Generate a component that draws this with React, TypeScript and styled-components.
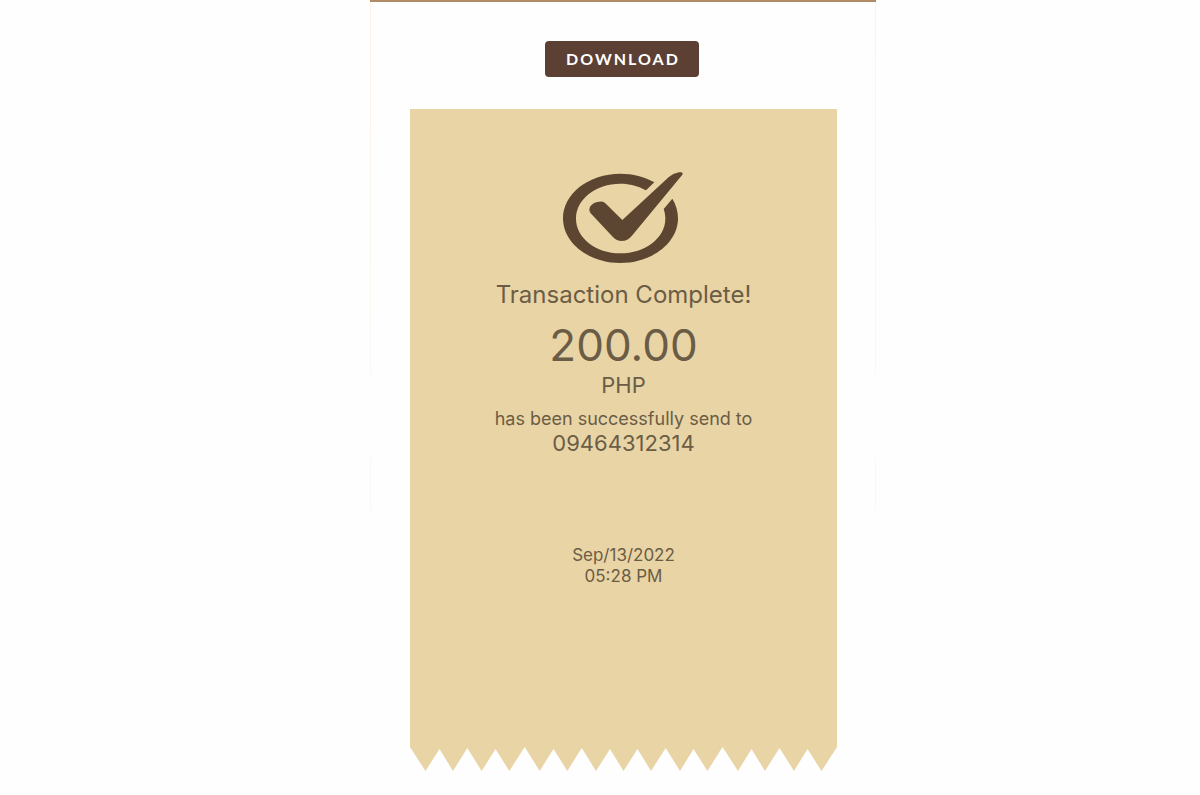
import React from "react";
import styled, { createGlobalStyle } from "styled-components";

const GlobalStyle = createGlobalStyle`
  *, *::before, *::after { box-sizing: border-box; }
  body { margin: 0; background: #fefefe; }
`;

const Page = styled.div`
  display: grid;
  grid-template-columns: 370fr 506fr 324fr;
  min-height: 100vh;
  font-family: Inter, Roboto, sans-serif;
`;

const Panel = styled.main`
  grid-column: 2;
  display: flex;
  flex-direction: column;
  align-items: center;
  padding: 39px 39px 24px 40px;
  border-top: 2px solid #b08c66;
  background:
    linear-gradient(#fbf3e4, #faf8f4) left 0 top 0 / 1px 373px no-repeat,
    linear-gradient(#f8f8f8, #f8f8f8) left 0 top 456px / 1px 53px no-repeat,
    linear-gradient(#fbf3e4, #faf8f4) right 0 top 0 / 1px 373px no-repeat,
    linear-gradient(#f8f8f8, #f8f8f8) right 0 top 456px / 1px 53px no-repeat,
    #fefefe;
`;

const DownloadButton = styled.button`
  width: 154px;
  height: 36px;
  margin: 0 3px 32px 0;
  padding: 0 0 2px 2px;
  border: 0;
  border-radius: 4px;
  background: #5c4033;
  color: #fff;
  font-family: Lato, sans-serif;
  font-size: 16px;
  font-weight: 700;
  letter-spacing: 2px;
  cursor: pointer;
`;

const Receipt = styled.section`
  align-self: stretch;
  display: flex;
  flex-direction: column;
`;

const ReceiptBody = styled.div`
  display: flex;
  flex-direction: column;
  align-items: center;
  min-height: 636px;
  padding-top: 63px;
  background: #e9d4a5;
  color: #6b5d45;
  text-align: center;
`;

const CheckIcon = styled.svg`
  display: block;
  width: 120px;
  height: 91px;
  margin-right: 2px;
  fill: #5d4631;
`;

const Title = styled.h1`
  margin: 16px 0 8px;
  font-size: 24px;
  font-weight: 400;
  line-height: 32px;
`;

const Amount = styled.p`
  margin: 0;
  font-size: 44px;
  line-height: 52px;
`;

const Currency = styled.p`
  margin: 0 0 8px;
  font-size: 22px;
  line-height: 28px;
`;

const Message = styled.p`
  margin: 0;
  font-size: 18px;
  line-height: 24px;
`;

const Recipient = styled.p`
  margin: 0;
  font-size: 22px;
  line-height: 24px;
`;

const Timestamp = styled.time`
  display: flex;
  flex-direction: column;
  margin-top: 90px;
  font-size: 17px;
  line-height: 21px;
`;

const TornEdge = styled.svg`
  display: block;
  width: 100%;
  height: 26px;
  fill: #e9d4a5;
`;

export default function App() {
  return (
    <>
      <GlobalStyle />
      <Page>
        <Panel>
          <DownloadButton type="button">DOWNLOAD</DownloadButton>
          <Receipt>
            <ReceiptBody>
              <CheckIcon viewBox="39 36 360 273" preserveAspectRatio="none" aria-hidden="true">
                <path d="M313 67 C285 50 248 41 211 41 C116 41 39 101 39 175 C39 249 116 309 211 309 C306 309 384 249 384 175 C384 154 378 134 367 116 L341 147 C344 156 346 166 346 176 C346 233 286 280 211 280 C137 280 78 233 78 176 C78 118 137 71 211 71 C239 71 266 78 288 91 Z" />
                <path d="M119 144 C122 132 142 123 158 125 Q162 126 166 130 L217 180 L350 57 C366 42 382 36 394 37 Q400 38 397 44 L247 226 C236 239 227 243 216 243 C204 243 197 239 188 230 L122 160 Q116 152 119 144 Z" />
              </CheckIcon>
              <Title>Transaction Complete!</Title>
              <Amount>200.00</Amount>
              <Currency>PHP</Currency>
              <Message>has been successfully send to</Message>
              <Recipient>09464312314</Recipient>
              <Timestamp dateTime="2022-09-13T17:28">
                <span>Sep/13/2022</span>
                <span>05:28 PM</span>
              </Timestamp>
            </ReceiptBody>
            <TornEdge viewBox="0 0 427 26" preserveAspectRatio="none" aria-hidden="true">
              <path d="M0 0 V2 L15.5 26 L29.5 4 L43 26 L57.3 3 L71.7 26 L85.5 4 L99.3 26 L114.7 2 L129.7 26 L143.5 4 L157.3 26 L171.7 3 L186 26 L200 4 L213.5 26 L227.5 4 L241 26 L255.7 3 L270 26 L283.5 4 L297.5 26 L312.5 2 L328 26 L341.5 4 L355 26 L369.5 3 L384 26 L397.5 4 L411.5 26 L427 2 V0 Z" />
            </TornEdge>
          </Receipt>
        </Panel>
      </Page>
    </>
  );
}
